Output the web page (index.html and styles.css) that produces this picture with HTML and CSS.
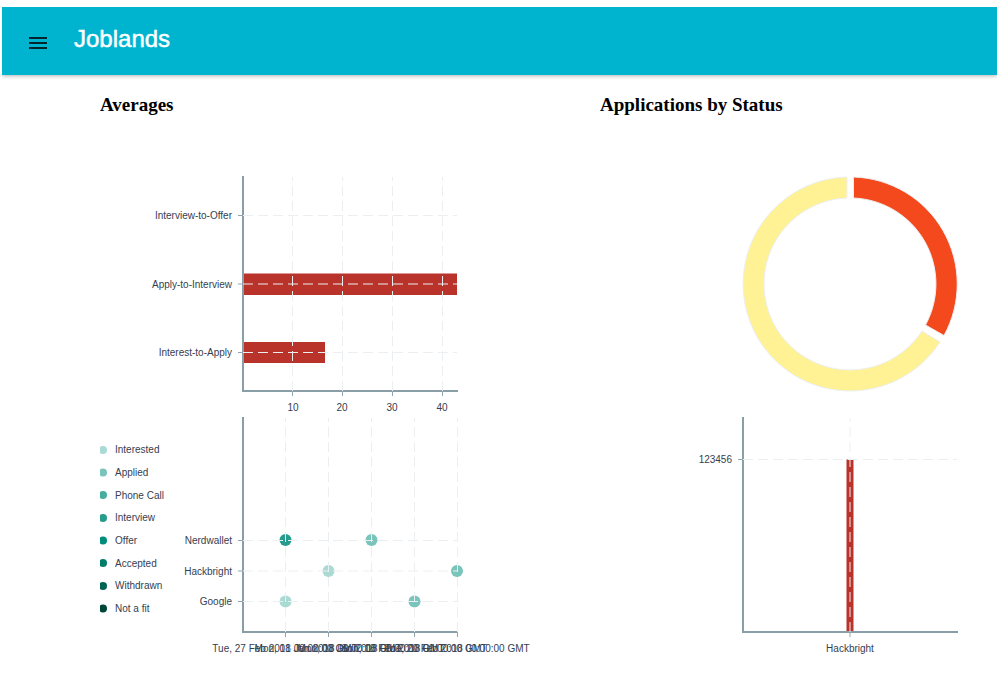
FILE: index.html
```html
<!DOCTYPE html>
<html lang="en">
<head>
<meta charset="utf-8">
<title>Joblands</title>
<link rel="stylesheet" href="styles.css">
</head>
<body>
<header class="app-bar">
  <button class="menu-button" type="button" aria-label="Open menu">
    <svg class="menu-icon" viewBox="0 0 24 24" aria-hidden="true"><path d="M3 18h18v-2H3v2zm0-5h18v-2H3v2zm0-7v2h18V6H3z"/></svg>
  </button>
  <h1 class="app-title">Joblands</h1>
</header>
<main class="dashboard">
  <section class="column">
    <h2 class="heading">Averages</h2>
    <svg class="chart" viewBox="0 0 397 290" role="img" aria-label="Average days between stages">
      <rect class="bar" x="143" y="146.500" width="214" height="21.500"/>
      <rect class="bar" x="143" y="215" width="82" height="21"/>
      <path class="axis" d="M143 49V264H358"/>
      <path class="grid" d="M192.500 264V50M242.500 264V50M292.500 264V50M342.500 264V50M143 88.500H357M143 157H357M143 225.500H357"/>
      <path class="tick" d="M192.500 264v5M242.500 264v5M292.500 264v5M342.500 264v5M143 88.500h-5M143 157h-5M143 225.500h-5"/>
      <g class="label label-end">
        <text x="132" y="92">Interview-to-Offer</text>
        <text x="132" y="161">Apply-to-Interview</text>
        <text x="132" y="229">Interest-to-Apply</text>
      </g>
      <g class="label label-middle">
        <text x="193" y="284">10</text>
        <text x="242" y="284">20</text>
        <text x="292" y="284">30</text>
        <text x="342" y="284">40</text>
      </g>
    </svg>
    <svg class="chart" viewBox="0 0 397 250" role="img" aria-label="Application timeline by company">
      <defs><clipPath id="legend-edge"><rect x="0" y="0" width="20" height="250"/></clipPath></defs>
      <g clip-path="url(#legend-edge)">
        <circle class="interested" cx="3" cy="33" r="4"/>
        <circle class="applied" cx="3" cy="55.500" r="4"/>
        <circle class="phone" cx="3" cy="78" r="4"/>
        <circle class="interview" cx="3" cy="101" r="4"/>
        <circle class="offer" cx="3" cy="123.500" r="4"/>
        <circle class="accepted" cx="3" cy="146" r="4"/>
        <circle class="withdrawn" cx="3" cy="169" r="4"/>
        <circle class="not-fit" cx="3" cy="191.500" r="4"/>
      </g>
      <g class="label">
        <text x="15" y="36">Interested</text>
        <text x="15" y="59">Applied</text>
        <text x="15" y="82">Phone Call</text>
        <text x="15" y="104">Interview</text>
        <text x="15" y="127">Offer</text>
        <text x="15" y="150">Accepted</text>
        <text x="15" y="172">Withdrawn</text>
        <text x="15" y="195">Not a fit</text>
      </g>
      <circle class="interview" cx="185.500" cy="123" r="6"/>
      <circle class="interested" cx="185.500" cy="184.500" r="6"/>
      <circle class="interested" cx="228.500" cy="154" r="6"/>
      <circle class="applied" cx="271.500" cy="123" r="6"/>
      <circle class="applied" cx="314.500" cy="184.500" r="6"/>
      <circle class="applied" cx="357" cy="154" r="6"/>
      <path class="axis" d="M143 0V215H358"/>
      <path class="grid" d="M185.500 215V1M228.500 215V1M271.500 215V1M314.500 215V1M357.500 215V1M143 123.500H357M143 154H357M143 184.500H357"/>
      <path class="tick" d="M185.500 215v5M228.500 215v5M271.500 215v5M314.500 215v5M357.500 215v5M143 123.500h-5M143 154h-5M143 184.500h-5"/>
      <g class="label label-end">
        <text x="132" y="127">Nerdwallet</text>
        <text x="132" y="158">Hackbright</text>
        <text x="132" y="188">Google</text>
      </g>
      <g class="label label-middle">
        <text x="185" y="235">Tue, 27 Feb 2018 00:00:00 GMT</text>
        <text x="228" y="235">Mon, 01 Jan 2018 00:00:00 GMT</text>
        <text x="271" y="235">Mon, 08 Jan 2018 00:00:00 GMT</text>
        <text x="314" y="235">Sun, 18 Feb 2018 00:00:00 GMT</text>
        <text x="357" y="235">Tue, 20 Feb 2018 00:00:00 GMT</text>
      </g>
    </svg>
  </section>
  <section class="column">
    <h2 class="heading">Applications by Status</h2>
    <svg class="chart" viewBox="0 0 397 290" role="img" aria-label="Applications by status">
      <path class="slice slice-red" d="M253.500 50A107 107 0 0 1 344 208.500L325.500 198A86 86 0 0 0 253.500 71Z"/>
      <path class="slice slice-yellow" d="M340 215A107 107 0 1 1 247 50V71A86 86 0 1 0 322 204Z"/>
    </svg>
    <svg class="chart" viewBox="0 0 397 250" role="img" aria-label="Offer salary by company">
      <rect class="bar" x="246.500" y="42.500" width="7" height="172.500"/>
      <path class="axis" d="M143 0V215H358"/>
      <path class="grid" d="M250 215V1M143 42.500H357"/>
      <path class="tick" d="M250 215v5M143 42.500h-5"/>
      <g class="label label-end"><text x="132" y="46">123456</text></g>
      <g class="label label-middle"><text x="250" y="235">Hackbright</text></g>
    </svg>
  </section>
</main>
</body>
</html>
```

FILE: styles.css
```css
body {
  margin: 7px 0 0 2px;
  background: #fff;
  font-family: "Liberation Serif", "Times New Roman", serif;
  color: #000;
}

.app-bar {
  display: flex;
  align-items: flex-start;
  gap: 12px;
  min-height: 68px;
  padding: 0 12px;
  box-sizing: border-box;
  background: #00b4d0;
  box-shadow: 0 1px 4px rgba(0, 0, 0, 0.3);
}

.menu-button {
  width: 48px;
  height: 48px;
  margin: 12px 0 0;
  padding: 12px;
  border: 0;
  background: none;
  cursor: pointer;
}

.menu-icon {
  display: block;
  width: 24px;
  height: 24px;
  fill: #06242c;
}

.app-title {
  margin: 0;
  font: 400 24px/64px "Liberation Sans", Arial, sans-serif;
  color: #fff;
  -webkit-text-stroke: 0.5px #fff;
}

.dashboard {
  display: grid;
  grid-template-columns: 1fr 1fr;
  column-gap: 103px;
  padding-left: 98px;
}

.column {
  min-width: 0;
}

.heading {
  margin: 19px 0 11px;
  font-size: 19px;
  line-height: 22px;
}

.chart {
  display: block;
  width: 100%;
  overflow: visible;
}

.axis {
  fill: none;
  stroke: #8a9ea8;
  stroke-width: 2;
}

.grid {
  fill: none;
  stroke: #eceff1;
  stroke-dasharray: 10 5;
}

.tick {
  fill: none;
  stroke: #90a4ae;
}

.bar {
  fill: #ba332b;
}

.label {
  font-family: "Liberation Sans", Arial, sans-serif;
  font-size: 10px;
  fill: #36404f;
}

.label-end {
  text-anchor: end;
}

.label-middle {
  text-anchor: middle;
}

.slice {
  stroke: #eceff1;
}

.slice-red {
  fill: #f4491d;
}

.slice-yellow {
  fill: #fff294;
}

.interested { fill: #a9dad4; }
.applied { fill: #7ac4bb; }
.phone { fill: #47ad9f; }
.interview { fill: #269c8d; }
.offer { fill: #008c7b; }
.accepted { fill: #007d6b; }
.withdrawn { fill: #006253; }
.not-fit { fill: #004637; }
```
